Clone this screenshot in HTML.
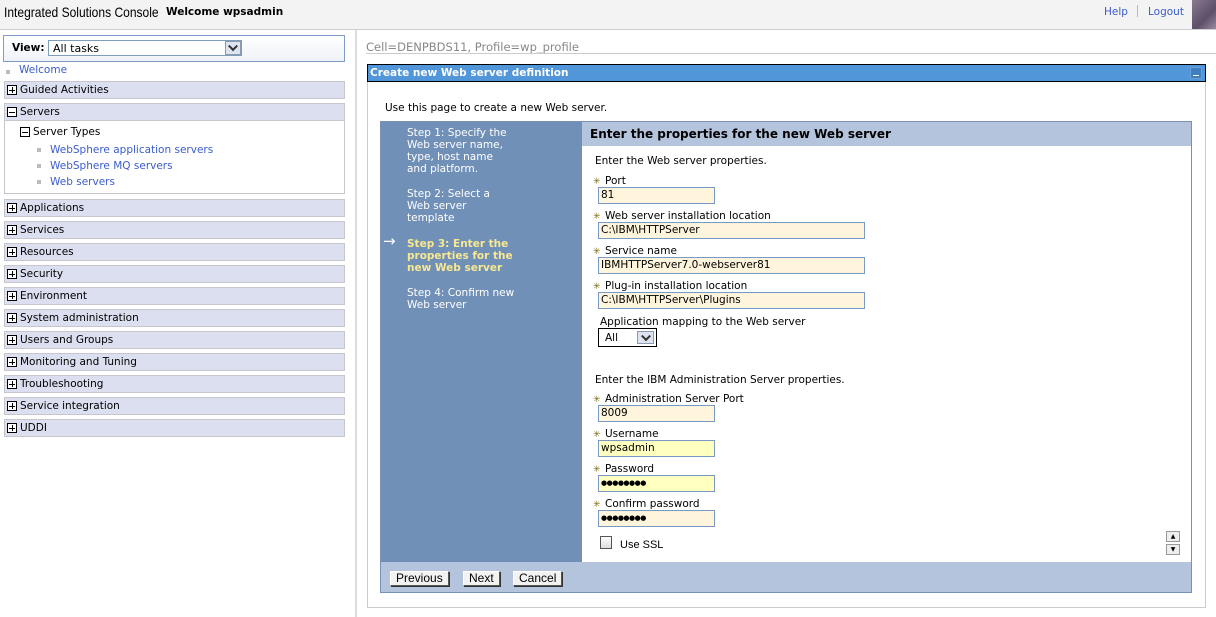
<!DOCTYPE html>
<html><head><meta charset="utf-8"><style>
*{margin:0;padding:0;box-sizing:border-box}
body{width:1216px;height:617px;position:relative;overflow:hidden;background:#fff;font-family:"DejaVu Sans","Liberation Sans",sans-serif;font-size:10.5px;color:#000}
.a{position:absolute;white-space:nowrap}
.hdr{left:0;top:0;width:1216px;height:30px;background:#f3f3f3;border-bottom:1px solid #cfcfcf}
.row{position:absolute;left:4px;width:341px;height:18px;background:#dcdff0;border:1px solid #c6c6cc}
.row span{position:absolute;left:15px;top:2px;font-size:10.5px}
.pl{position:absolute;left:2px;top:3px;width:10px;height:10px;border:1px solid #000;background:#fff}
.pl:before{content:"";position:absolute;left:1px;top:3.5px;width:6px;height:1px;background:#000}
.pl.p:after{content:"";position:absolute;left:3.5px;top:1px;width:1px;height:6px;background:#000}
.lnk{color:#3a5ccc}
.blt{position:absolute;width:4px;height:4px;background:#bbb}
.lab{position:absolute;left:605px;font-size:10.5px}
.st{position:absolute;left:593px;color:#7a6a10;font-size:9px}
.inp{position:absolute;left:598px;height:17px;border:1px solid #7a9ac6;background:#fff5dc;padding-left:2px;font-size:10.5px;line-height:15px}
.y{background:#ffffc0}
.pw{font-size:7px;letter-spacing:-0.5px}
.btn{position:absolute;top:571px;height:15px;border:1px solid #555;border-top-color:#fff;border-left-color:#fff;box-shadow:1px 1px 0 #333;background:#f2f2f2;font-family:"Liberation Sans",sans-serif;font-size:12px;line-height:13px;padding:0 5px}
.stp{position:absolute;left:407px;color:#fff;font-size:10.5px;line-height:12px;white-space:nowrap}
.dd{position:absolute;background:#dde4f0;border:1px solid #8a9ab0}
.dd:after{content:"";position:absolute;left:50%;top:50%;width:5px;height:5px;border-right:2px solid #333;border-bottom:2px solid #333;transform:translate(-50%,-75%) rotate(45deg)}
</style></head><body>
<div class="a hdr"></div>
<div class="a" style="left:4px;top:4px;font-family:'Liberation Sans',sans-serif;font-size:14px;display:inline-block;transform:scaleX(0.86);transform-origin:0 0">Integrated Solutions Console</div>
<div class="a" style="left:166px;top:6px;font-weight:bold;font-size:10.5px">Welcome wpsadmin</div>
<div class="a lnk" style="left:1104px;top:6px;font-size:10.5px">Help</div>
<div class="a" style="left:1137px;top:5px;width:1px;height:12px;background:#bbb"></div>
<div class="a lnk" style="left:1148px;top:6px;font-size:10.5px">Logout</div>
<div class="a" style="left:1192px;top:0;width:24px;height:29px;background:linear-gradient(135deg,#8a7a92,#5c4f68 60%,#9a8aa2)"></div>

<div class="a" style="left:355px;top:30px;width:2px;height:587px;background:#ddd"></div>
<div class="a" style="left:3px;top:35px;width:342px;height:27px;border:1px solid #7f9cc8;background:linear-gradient(#fff,#eef2f8)"></div>
<div class="a" style="left:12px;top:42px;font-weight:bold">View:</div>
<div class="a" style="left:48px;top:40px;width:194px;height:16px;border:1px solid #7f9db9;background:#fff;padding-left:4px;line-height:15px;font-size:11px">All tasks</div>
<div class="dd" style="left:225px;top:41px;width:16px;height:14px"></div>
<div class="blt" style="left:6px;top:70px"></div>
<div class="a lnk" style="left:19px;top:64px">Welcome</div>
<div class="row" style="top:81px"><div class="pl p"></div><span>Guided Activities</span></div>
<div class="row" style="top:103px"><div class="pl"></div><span>Servers</span></div>
<div class="a" style="left:4px;top:120px;width:341px;height:74px;border:1px solid #c6c6cc;border-top:none"></div>
<div class="pl a" style="left:20px;top:127px"></div>
<div class="a" style="left:33px;top:126px">Server Types</div>
<div class="blt" style="left:37px;top:148px"></div><div class="a lnk" style="left:50px;top:144px">WebSphere application servers</div>
<div class="blt" style="left:37px;top:164px"></div><div class="a lnk" style="left:50px;top:160px">WebSphere MQ servers</div>
<div class="blt" style="left:37px;top:180px"></div><div class="a lnk" style="left:50px;top:176px">Web servers</div>
<div class="row" style="top:199px"><div class="pl p"></div><span>Applications</span></div>
<div class="row" style="top:221px"><div class="pl p"></div><span>Services</span></div>
<div class="row" style="top:243px"><div class="pl p"></div><span>Resources</span></div>
<div class="row" style="top:265px"><div class="pl p"></div><span>Security</span></div>
<div class="row" style="top:287px"><div class="pl p"></div><span>Environment</span></div>
<div class="row" style="top:309px"><div class="pl p"></div><span>System administration</span></div>
<div class="row" style="top:331px"><div class="pl p"></div><span>Users and Groups</span></div>
<div class="row" style="top:353px"><div class="pl p"></div><span>Monitoring and Tuning</span></div>
<div class="row" style="top:375px"><div class="pl p"></div><span>Troubleshooting</span></div>
<div class="row" style="top:397px"><div class="pl p"></div><span>Service integration</span></div>
<div class="row" style="top:419px"><div class="pl p"></div><span>UDDI</span></div>

<div class="a" style="left:366px;top:40px;color:#888;font-size:11.5px">Cell=DENPBDS11, Profile=wp_profile</div>
<div class="a" style="left:366px;top:53px;width:850px;height:1px;background:#ccc"></div>
<div class="a" style="left:367px;top:81px;width:839px;height:527px;border:1px solid #ccc;border-top:none"></div>
<div class="a" style="left:367px;top:64px;width:839px;height:18px;background:#5196d8;border:1px solid #000"></div>
<div class="a" style="left:370px;top:67px;color:#fff;font-weight:bold;font-size:10.5px">Create new Web server definition</div>
<div class="a" style="left:1190px;top:67px;width:12px;height:12px;background:#3f7fc0;border:1px solid #6aa0d8"></div>
<div class="a" style="left:1193px;top:75px;width:6px;height:1px;background:#fff"></div>
<div class="a" style="left:385px;top:102px">Use this page to create a new Web server.</div>

<div class="a" style="left:380px;top:121px;width:812px;height:472px;border:1px solid #7890b8;background:#fff"></div>
<div class="a" style="left:381px;top:122px;width:201px;height:440px;background:#7190b8"></div>
<div class="a" style="left:582px;top:122px;width:609px;height:24px;background:#b4c4dc"></div>
<div class="a" style="left:590px;top:127px;font-weight:bold;font-size:12px">Enter the properties for the new Web server</div>
<div class="a" style="left:381px;top:562px;width:810px;height:30px;background:#b4c4dc"></div>
<div class="stp" style="top:127px">Step 1: Specify the<br>Web server name,<br>type, host name<br>and platform.</div>
<div class="stp" style="top:188px">Step 2: Select a<br>Web server<br>template</div>
<div class="a" style="left:383px;top:232px;color:#fff;font-size:15px">&#8594;</div>
<div class="stp" style="top:238px;color:#f8e890;font-weight:bold">Step 3: Enter the<br>properties for the<br>new Web server</div>
<div class="stp" style="top:287px">Step 4: Confirm new<br>Web server</div>

<div class="a" style="left:595px;top:155px">Enter the Web server properties.</div>
<div class="st" style="top:177px">&#10035;</div><div class="lab" style="top:175px">Port</div>
<div class="inp" style="top:187px;width:117px">81</div>
<div class="st" style="top:212px">&#10035;</div><div class="lab" style="top:210px">Web server installation location</div>
<div class="inp" style="top:222px;width:267px">C:\IBM\HTTPServer</div>
<div class="st" style="top:247px">&#10035;</div><div class="lab" style="top:245px">Service name</div>
<div class="inp" style="top:257px;width:267px">IBMHTTPServer7.0-webserver81</div>
<div class="st" style="top:282px">&#10035;</div><div class="lab" style="top:280px">Plug-in installation location</div>
<div class="inp" style="top:292px;width:267px">C:\IBM\HTTPServer\Plugins</div>
<div class="a" style="left:600px;top:316px">Application mapping to the Web server</div>
<div class="a" style="left:598px;top:328px;width:59px;height:19px;border:1px solid #000;padding:3px 0 0 6px">All</div>
<div class="dd" style="left:637px;top:331px;width:17px;height:13px"></div>
<div class="a" style="left:595px;top:374px">Enter the IBM Administration Server properties.</div>
<div class="st" style="top:395px">&#10035;</div><div class="lab" style="top:393px">Administration Server Port</div>
<div class="inp" style="top:405px;width:117px">8009</div>
<div class="st" style="top:430px">&#10035;</div><div class="lab" style="top:428px">Username</div>
<div class="inp y" style="top:440px;width:117px">wpsadmin</div>
<div class="st" style="top:465px">&#10035;</div><div class="lab" style="top:463px">Password</div>
<div class="inp y pw" style="top:475px;width:117px">&#9679;&#9679;&#9679;&#9679;&#9679;&#9679;&#9679;&#9679;</div>
<div class="st" style="top:500px">&#10035;</div><div class="lab" style="top:498px">Confirm password</div>
<div class="inp pw" style="top:510px;width:117px">&#9679;&#9679;&#9679;&#9679;&#9679;&#9679;&#9679;&#9679;</div>
<div class="a" style="left:600px;top:536px;width:12px;height:13px;border:1px solid #555;background:linear-gradient(#fff,#ddd)"></div>
<div class="a" style="left:620px;top:539px;font-family:'Liberation Sans',sans-serif;font-size:11px">Use SSL</div>
<div class="a" style="left:1166px;top:531px;width:14px;height:11px;border:1px solid #999;background:#eee;font-size:6px;text-align:center;line-height:9px">&#9650;</div>
<div class="a" style="left:1166px;top:544px;width:14px;height:11px;border:1px solid #999;background:#eee;font-size:6px;text-align:center;line-height:9px">&#9660;</div>
<div class="btn" style="left:390px">Previous</div>
<div class="btn" style="left:463px">Next</div>
<div class="btn" style="left:513px">Cancel</div>
</body></html>
